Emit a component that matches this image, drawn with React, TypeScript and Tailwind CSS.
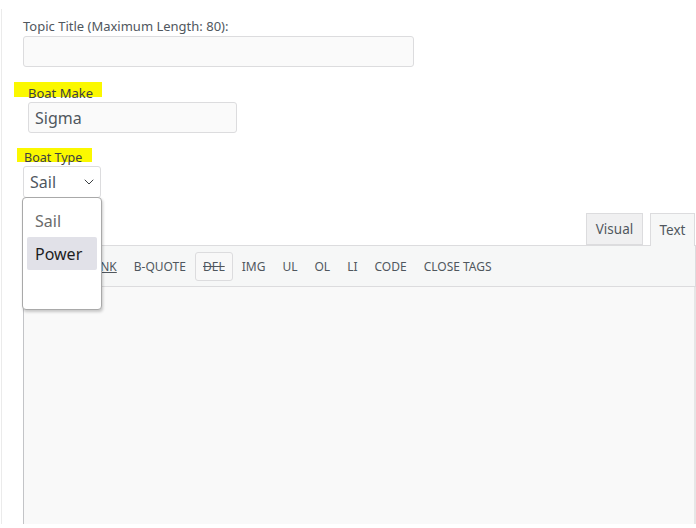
import { ChevronDown } from "lucide-react";

const toolbarButtons = ["B", "I", "LINK", "B-QUOTE", "DEL", "IMG", "UL", "OL", "LI", "CODE", "CLOSE TAGS"];

const ToolbarButton = ({ label }: { label: string }) => {
    const isDel = label === "DEL";
    const isLink = label === "LINK";
    return (
        <button
            className={`flex h-[29px] items-center rounded-[3px] border px-[7px] pt-px text-[12px] text-[#50575e] ${
                isDel ? "border-[#dcdcde] bg-[#f8f8f8] line-through" : "border-transparent"
            } ${isLink ? "underline" : ""}`}
        >
            {label}
        </button>
    );
};

export default function App() {
    return (
        <div className="h-[528px] w-[696px] overflow-hidden bg-white font-['Noto_Sans',sans-serif]">
            <div className="ml-px mt-[9px] flex h-[515px] flex-col border-l border-[#ebebeb] pl-[21px]">
                <label className="mt-[9px] text-[13px] leading-[17px] text-[#50575e]">
                    Topic Title (Maximum Length: 80):
                </label>
                <div className="mt-px h-[32px] w-[391px] rounded-[3px] border border-[#dcdcde] bg-[#fafafa]" />

                <label className="ml-[-9px] mt-[15px] h-[20px] w-fit bg-[linear-gradient(#fbf800,#fbf800)] bg-[length:88px_15px] bg-no-repeat pl-[14px] pr-[12px] text-[13px] leading-[22px] text-[#3c4043]">
                    Boat Make
                </label>
                <div className="ml-[5px] mt-0 flex h-[31px] w-[209px] items-center rounded-[3px] border border-[#dcdcde] bg-[#fafafa] pl-[6px] text-[16px] text-[#50575e]">
                    Sigma
                </div>

                <label className="ml-[-6px] mt-[15px] h-[18px] w-[75px] bg-[linear-gradient(#fbf800,#fbf800)] bg-[length:75px_14px] bg-no-repeat pl-[7px] text-[12.5px] leading-[20px] text-[#3c4043]">
                    Boat Type
                </label>
                <div className="relative z-10 w-[78px]">
                    <div className="flex h-[32px] items-center justify-between rounded-[3px] border border-[#dcdcde] bg-white pl-[6px] pr-[3px] text-[16px] text-[#50575e]">
                        Sail
                        <ChevronDown size={16} strokeWidth={1.5} className="text-[#3c4043]" />
                    </div>
                    <div className="absolute left-[-1px] top-[31px] h-[113px] w-[80px] rounded-[4px] border border-[#a9a9a9] bg-white px-[4px] pt-[6px] shadow-[1px_2px_3px_rgba(0,0,0,0.2)]">
                        <div className="flex h-[33px] items-center pl-[8px] text-[16px] text-[#6b6b6b]">Sail</div>
                        <div className="flex h-[33px] items-center rounded-[2px] bg-[#e1e1e8] pl-[8px] text-[16px] text-[#1d1d1f]">
                            Power
                        </div>
                    </div>
                </div>

                <div className="mt-[15px] flex w-[673px] flex-col">
                    <div className="flex justify-end gap-[7px] pr-px">
                        <div className="flex h-[32px] w-[57px] items-center justify-center border border-[#dcdcde] bg-[#f0f0f1] text-[13.5px] text-[#50575e]">
                            Visual
                        </div>
                        <div className="relative z-[1] -mb-px flex h-[33px] w-[45px] items-center justify-center border border-b-0 border-[#dcdcde] bg-[#f6f7f7] text-[13.5px] text-[#50575e]">
                            Text
                        </div>
                    </div>
                    <div className="flex h-[42px] items-center gap-[1px] border border-[#dcdcde] bg-[#f6f7f7] pl-[12px]">
                        {toolbarButtons.map((b) => (
                            <ToolbarButton key={b} label={b} />
                        ))}
                    </div>
                    <div className="h-[237px] border-l border-r-2 border-l-[#c3c4c7] border-r-[#e6e6e6] bg-[#f9f9f9]" />
                </div>
            </div>
        </div>
    );
}
